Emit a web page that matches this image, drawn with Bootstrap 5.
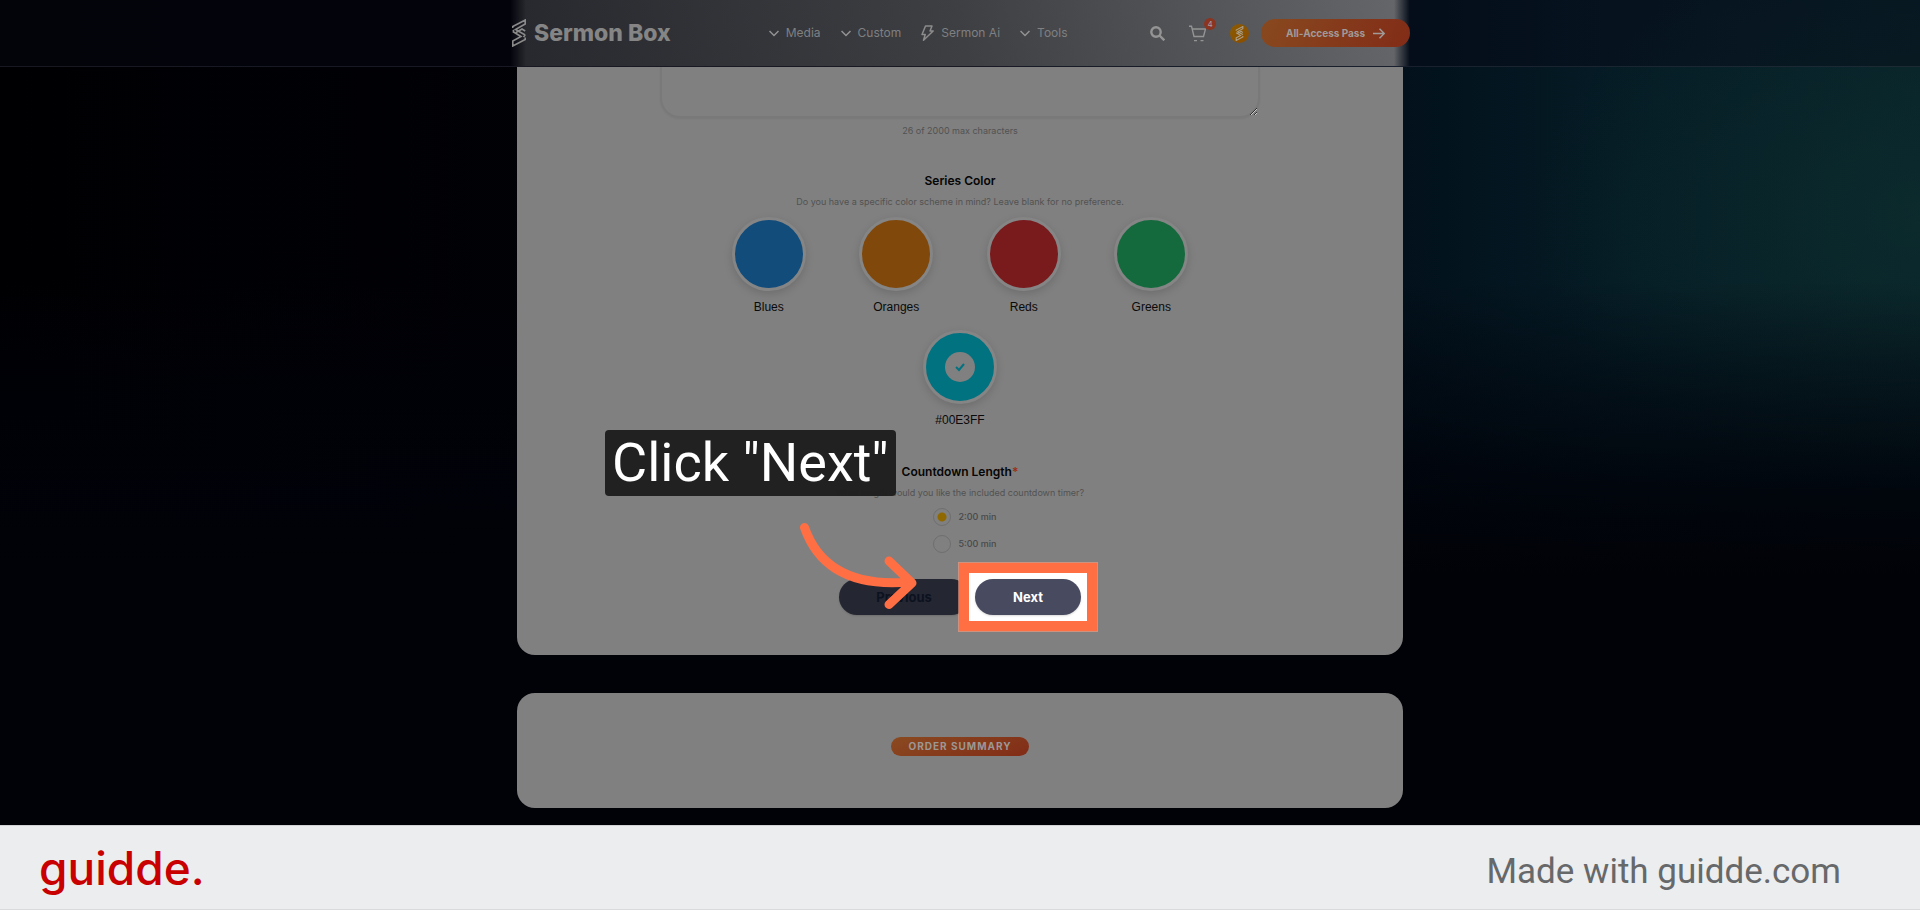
<!DOCTYPE html>
<html lang="en">
<head>
<meta charset="utf-8">
<meta name="viewport" content="width=device-width, initial-scale=1">
<title>Sermon Box – Custom Series</title>
<link href="https://cdn.jsdelivr.net/npm/bootstrap@5.3.0/dist/css/bootstrap.min.css" rel="stylesheet">
<style>
  :root { --dim: #808080; --ink: #0a0a0b; --soft: #525252; --accent: #ff6f43; --shell: 886px; }
  body { font-family: Inter, "Liberation Sans", sans-serif; font-size: 12px; line-height: 16px; color: var(--ink); background: #000; }
  .stage {
    background:
      linear-gradient(180deg, transparent 34%, rgba(0, 2, 9, .5) 48%, rgba(0, 2, 9, .88) 60%, #010207 70%),
      radial-gradient(ellipse 20% 34% at 100% 26%, rgba(14, 48, 46, .6) 0%, rgba(8, 36, 40, 0) 100%),
      linear-gradient(90deg, #000003 0%, #010208 50%, #02101b 72%, #051b25 84%, #08222a 100%);
  }
  .site-header { position: relative; height: 67px; border-bottom: 1px solid rgba(120, 120, 140, .18); background: rgba(8, 8, 22, .4); }
  .site-header::before {
    content: ""; position: absolute; inset: 0; margin: 0 auto; max-width: 900px;
    background: linear-gradient(78deg, #27282d, #3e3f43 50%, #66676a);
    -webkit-mask-image: linear-gradient(90deg, transparent, #000 16px, #000 calc(100% - 16px), transparent);
    mask-image: linear-gradient(90deg, transparent, #000 16px, #000 calc(100% - 16px), transparent);
  }
  .header-row { position: relative; max-width: 900px; height: 66px; padding-left: 2px; }
  .logo-text { font-size: 23px; line-height: 28px; font-weight: 800; color: #858585; }
  .main-menu { margin-left: 98px; gap: 20px; }
  .main-menu a { color: #7f8082; gap: 7px; }
  .header-tools button, .header-tools a { color: #949494; }
  .cart-count { position: absolute; top: -7px; right: -10px; width: 12px; height: 12px; border-radius: 50%; background: #8b3420; color: #a9a0a0; font-size: 8px; line-height: 12px; text-align: center; }
  .avatar { width: 19px; height: 19px; border-radius: 50%; background: linear-gradient(135deg, #8c5a00, #8a4d00); }
  .pass-btn { width: 149px; height: 28px; font-size: 10px; line-height: 16px; font-weight: 700; background: linear-gradient(115deg, #88491f, #822c17); }
  .header-tools .pass-btn { color: #a09a98; }
  .panel { width: 100%; max-width: var(--shell); background: var(--dim); border-radius: 18px; }
  .panel-form { position: relative; border-top-left-radius: 0; border-top-right-radius: 0; padding-bottom: 40px; }
  .details-box { width: 600px; max-width: 90%; height: 51px; border: 2px solid #797979; border-top: 0; border-radius: 0 0 20px 20px; background: transparent; box-shadow: 0 1px 2px rgba(0, 0, 0, .06); resize: vertical; }
  .hint { font-size: 9px; line-height: 12px; color: var(--soft); margin-top: 7px; }
  .title { font-size: 12px; line-height: 16px; font-weight: 600; color: #050505; margin-top: 36px; }
  .swatches { max-width: 510px; row-gap: 15px; margin-top: 9px; }
  .swatch { width: 25%; }
  .swatch input { appearance: none; width: 74px; height: 74px; margin: 0; border: 3px solid #858585; border-radius: 50%; background: var(--c); box-shadow: 0 3px 8px rgba(0, 0, 0, .15); }
  .swatch label { font-family: "Liberation Sans", Arial, sans-serif; font-size: 12px; line-height: 16px; }
  .tick { position: absolute; inset: 0; margin: auto; pointer-events: none; }
  .length-list { gap: 9px; margin-top: 9px; padding-left: 9px; }
  .length-list label { font-size: 9px; line-height: 18px; font-weight: 500; color: #484848; }
  .length-list input { appearance: none; width: 18px; height: 18px; margin: 0; border: 1px solid #6f6f6f; border-radius: 50%; }
  .length-list input:checked { background: radial-gradient(circle, #8f6800 4px, transparent 5px); }
  .step-row { gap: 6px; margin-top: 26px; }
  .step-btn { height: 36px; border: 0; border-radius: 18px; font-size: 13px; line-height: 20px; font-weight: 700; box-shadow: 0 1px 2px rgba(0, 0, 0, .15); }
  .step-prev { width: 130px; background: #242632; color: #0c121f; }
  .step-next { width: 106px; background: #484b60; color: #fff; }
  .spotlight { position: relative; z-index: 1; }
  .spotlight::before { content: ""; position: absolute; z-index: -1; inset: -16px; border: 10px solid var(--accent); background: #fff; outline: 1px solid rgba(255, 160, 130, .6); }
  .callout { position: absolute; z-index: 2; top: 363px; left: 88px; padding: 1px 7px; border-radius: 4px; background: rgba(31, 31, 31, .98); color: #fff; font-family: Roboto, sans-serif; font-size: 54px; line-height: 64px; white-space: nowrap; }
  .pointer { position: absolute; z-index: 2; left: -40px; top: -58px; pointer-events: none; }
  .panel-summary { margin-top: 38px; margin-bottom: 16px; padding: 44px 0 52px; }
  .summary-tag { padding: 0 17px; border-radius: 10px; background: linear-gradient(160deg, #8a4a20, #822c17); color: #9c9795; font-size: 10px; line-height: 19px; font-weight: 700; letter-spacing: 1px; }
  .brand-bar { background: #ecedef; border-top: 1px solid #d3d3d6; border-bottom: 1px solid #d9dadc; padding: 0 79px 0 39px; height: 85px; }
  .brand-name { font-family: Inter, sans-serif; font-size: 46px; line-height: 64px; font-weight: 500; color: #c90000; }
  .brand-note { font-family: Roboto, sans-serif; font-size: 35px; line-height: 48px; color: #66686a; padding-top: 8px; }
</style>
</head>
<body class="d-flex flex-column min-vh-100">
<div class="stage flex-grow-1 d-flex flex-column">
  <header class="site-header">
    <div class="header-row mx-auto d-flex align-items-center">
      <a href="#" class="d-flex align-items-center text-decoration-none gap-2">
        <svg width="14" height="28" viewBox="0 0 14 28" fill="none" stroke="#8a8a8a" stroke-width="1.6"><path d="M.8 9V7.500L13.200 1V5L3.500 10.500 13.200 16M.8 12.500 9 17.500.8 22V27L13.200 20.500V18.500M.8 12.500 2 11M13.200 16 11.500 18M4 13.500l6-3.500 3.200 2"/></svg>
        <span class="logo-text">Sermon Box</span>
      </a>
      <nav class="main-menu d-flex align-items-center">
        <a href="#" class="d-flex align-items-center text-decoration-none"><svg width="10" height="7" viewBox="0 0 10 7" fill="none" stroke="#929292" stroke-width="1.500"><path d="M.5 1 5 5.500 9.500 1"/></svg>Media</a>
        <a href="#" class="d-flex align-items-center text-decoration-none"><svg width="10" height="7" viewBox="0 0 10 7" fill="none" stroke="#929292" stroke-width="1.500"><path d="M.5 1 5 5.500 9.500 1"/></svg>Custom</a>
        <a href="#" class="d-flex align-items-center text-decoration-none"><svg width="13" height="16" viewBox="0 0 13 16" fill="none" stroke="#8c8c8c" stroke-width="1.500" stroke-linejoin="round"><path d="M4.500 1H11L9 6h3.200L2.500 15.200 4.200 9.500H1Z"/></svg>Sermon Ai</a>
        <a href="#" class="d-flex align-items-center text-decoration-none"><svg width="10" height="7" viewBox="0 0 10 7" fill="none" stroke="#929292" stroke-width="1.500"><path d="M.5 1 5 5.500 9.500 1"/></svg>Tools</a>
      </nav>
      <div class="header-tools ms-auto d-flex align-items-center">
        <button type="button" class="btn p-0 border-0 d-flex me-4" aria-label="Search"><svg width="15" height="15" viewBox="0 0 15 15" fill="none" stroke="currentColor" stroke-width="2.400"><circle cx="6" cy="6" r="4.700"/><path d="m9.500 9.500 4.800 4.800"/></svg></button>
        <a href="#" class="position-relative d-flex me-4" aria-label="Cart"><svg width="17" height="17" viewBox="0 0 17 17" fill="none" stroke="currentColor" stroke-width="1.400"><path d="M0 1.200h2.500L5 11.500h9.500L16.500 4H3.300M5 15.600h3M11.500 15.600h3"/></svg><span class="cart-count">4</span></a>
        <a href="#" class="avatar d-flex align-items-center justify-content-center me-2" aria-label="Account"><svg width="9" height="15" viewBox="0 0 14 28" fill="none" stroke="#aaa08c" stroke-width="2"><path d="M.8 9V7.500L13.200 1V5L3.500 10.500 13.200 16M.8 12.500 9 17.500.8 22V27L13.200 20.500V18.500M4 13.500l6-3.500 3.200 2"/></svg></a>
        <a href="#" class="pass-btn rounded-pill d-flex align-items-center justify-content-center gap-2 text-decoration-none ms-1">All-Access Pass<svg width="12" height="11" viewBox="0 0 12 11" fill="none" stroke="currentColor" stroke-width="1.500"><path d="M0 5.500h11M6.500.8 11.200 5.500 6.500 10.200"/></svg></a>
      </div>
    </div>
  </header>

  <main class="flex-grow-1 d-flex flex-column align-items-center">
    <form class="panel panel-form d-flex flex-column align-items-center text-center">
      <textarea class="details-box d-block" aria-label="Series details" aria-describedby="count"></textarea>
      <div id="count" class="hint">26 of 2000 max characters</div>

      <div class="title">Series Color</div>
      <div class="hint">Do you have a specific color scheme in mind? Leave blank for no preference.</div>
      <div class="swatches w-100 d-flex flex-wrap justify-content-center">
        <div class="swatch d-flex flex-column align-items-center"><input type="radio" name="tone" id="blues" style="--c:#114c7b"><label for="blues" class="mt-2">Blues</label></div>
        <div class="swatch d-flex flex-column align-items-center"><input type="radio" name="tone" id="oranges" style="--c:#80480b"><label for="oranges" class="mt-2">Oranges</label></div>
        <div class="swatch d-flex flex-column align-items-center"><input type="radio" name="tone" id="reds" style="--c:#791b1d"><label for="reds" class="mt-2">Reds</label></div>
        <div class="swatch d-flex flex-column align-items-center"><input type="radio" name="tone" id="greens" style="--c:#146a3d"><label for="greens" class="mt-2">Greens</label></div>
        <div class="swatch d-flex flex-column align-items-center">
          <div class="position-relative d-flex"><input type="radio" name="tone" id="custom" checked style="--c:#007280"><svg class="tick" width="30" height="30" viewBox="0 0 30 30"><circle cx="15" cy="15" r="15" fill="#808080"/><path d="m11 15 3 3 5-6" fill="none" stroke="#007280" stroke-width="2"/></svg></div>
          <label for="custom" class="mt-2">#00E3FF</label>
        </div>
      </div>

      <div class="title">Countdown Length<span style="color:#9c2f1c">*</span></div>
      <div class="hint">What length would you like the included countdown timer?</div>
      <div class="length-list d-flex flex-column">
        <div class="d-flex align-items-center gap-2"><input type="radio" name="len" id="two" checked><label for="two">2:00 min</label></div>
        <div class="d-flex align-items-center gap-2"><input type="radio" name="len" id="five"><label for="five">5:00 min</label></div>
      </div>

      <div class="step-row position-relative d-flex">
        <button type="button" class="step-btn step-prev">Previous</button>
        <div class="spotlight d-flex"><button type="button" class="step-btn step-next">Next</button></div>
        <svg class="pointer" width="122" height="90" viewBox="0 0 122 90" fill="none" stroke="#ff6f43" stroke-width="9" stroke-linecap="round" stroke-linejoin="round"><path d="M5.500 6.500C19 45 51 66 110 61M90 40 113 62 90 83.500"/></svg>
      </div>
      <div class="callout">Click "Next"</div>
    </form>

    <section class="panel panel-summary d-flex justify-content-center">
      <div class="summary-tag">ORDER SUMMARY</div>
    </section>
  </main>
</div>
<footer class="brand-bar d-flex align-items-center justify-content-between">
  <div class="brand-name">guidde.</div>
  <div class="brand-note">Made with guidde.com</div>
</footer>
<script src="https://cdn.jsdelivr.net/npm/bootstrap@5.3.0/dist/js/bootstrap.bundle.min.js"></script>
</body>
</html>
